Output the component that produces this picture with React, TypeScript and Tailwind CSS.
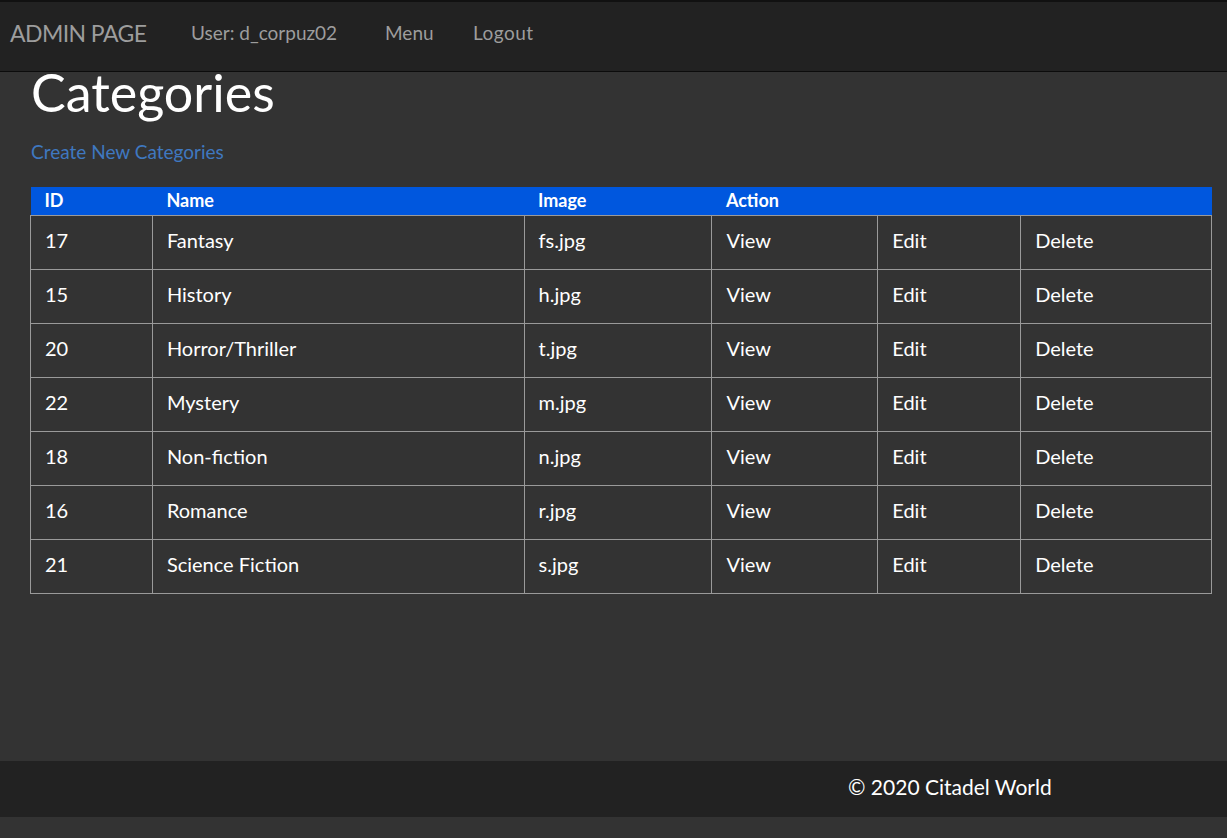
const rows = [
  { id: 17, name: "Fantasy", image: "fs.jpg" },
  { id: 15, name: "History", image: "h.jpg" },
  { id: 20, name: "Horror/Thriller", image: "t.jpg" },
  { id: 22, name: "Mystery", image: "m.jpg" },
  { id: 18, name: "Non-fiction", image: "n.jpg" },
  { id: 16, name: "Romance", image: "r.jpg" },
  { id: 21, name: "Science Fiction", image: "s.jpg" },
];

const font = { fontFamily: "Lato, 'Noto Sans', sans-serif" };

export default function App() {
  return (
    <div className="min-h-[838px] bg-[#333333]" style={font}>
      {/* Navbar */}
      <nav className="flex h-[72px] items-center border-t-2 border-b border-t-[#111] border-b-[#0c0c0c] bg-[#222222] pb-[6px] text-[#9d9d9d]">
        <span className="ml-[10px] w-[181px] text-[23px] tracking-tight">ADMIN PAGE</span>
        <span className="w-[194px] text-[19px]">User: d_corpuz02</span>
        <span className="w-[88px] text-[19px]">Menu</span>
        <span className="text-[19px] tracking-wide">Logout</span>
      </nav>

      {/* Content */}
      <main className="h-[689px] px-[30px] pt-[6px]">
        <h1 className="-mt-[12px] ml-px text-[52px] leading-[52px] text-white">Categories</h1>
        <a className="ml-px mt-[22px] block text-[19px] leading-[24px] text-[#3f78c0]">
          Create New Categories
        </a>

        <table className="mt-[23px] w-[1182px] border-collapse text-[20px] text-white">
          <colgroup>
            <col className="w-[122px]" />
            <col className="w-[372px]" />
            <col className="w-[188px]" />
            <col className="w-[166px]" />
            <col className="w-[143px]" />
            <col className="w-[191px]" />
          </colgroup>
          <thead>
            <tr className="h-[28px] bg-[#0057de] text-left text-[18px] font-bold">
              <th className="px-[14px] py-0 pb-[2px] leading-[24px]">ID</th>
              <th className="px-[14px] py-0 pb-[2px] leading-[24px]">Name</th>
              <th className="px-[14px] py-0 pb-[2px] leading-[24px]">Image</th>
              <th className="px-[14px] py-0 pb-[2px] leading-[24px]" colSpan={3}>
                Action
              </th>
            </tr>
          </thead>
          <tbody>
            {rows.map((r) => (
              <tr key={r.id} className="h-[54px]">
                <td className="border border-[#9a9a9a] px-[14px] pb-[4px]">{r.id}</td>
                <td className="border border-[#9a9a9a] px-[14px] pb-[4px]">{r.name}</td>
                <td className="border border-[#9a9a9a] px-[14px] pb-[4px]">{r.image}</td>
                <td className="border border-[#9a9a9a] px-[14px] pb-[4px]">View</td>
                <td className="border border-[#9a9a9a] px-[14px] pb-[4px]">Edit</td>
                <td className="border border-[#9a9a9a] px-[14px] pb-[4px]">Delete</td>
              </tr>
            ))}
          </tbody>
        </table>
      </main>

      {/* Footer */}
      <footer className="flex h-[56px] items-center bg-[#222222] pb-[4px] text-[21px] text-white">
        <span className="ml-[848px]">© 2020 Citadel World</span>
      </footer>
    </div>
  );
}
